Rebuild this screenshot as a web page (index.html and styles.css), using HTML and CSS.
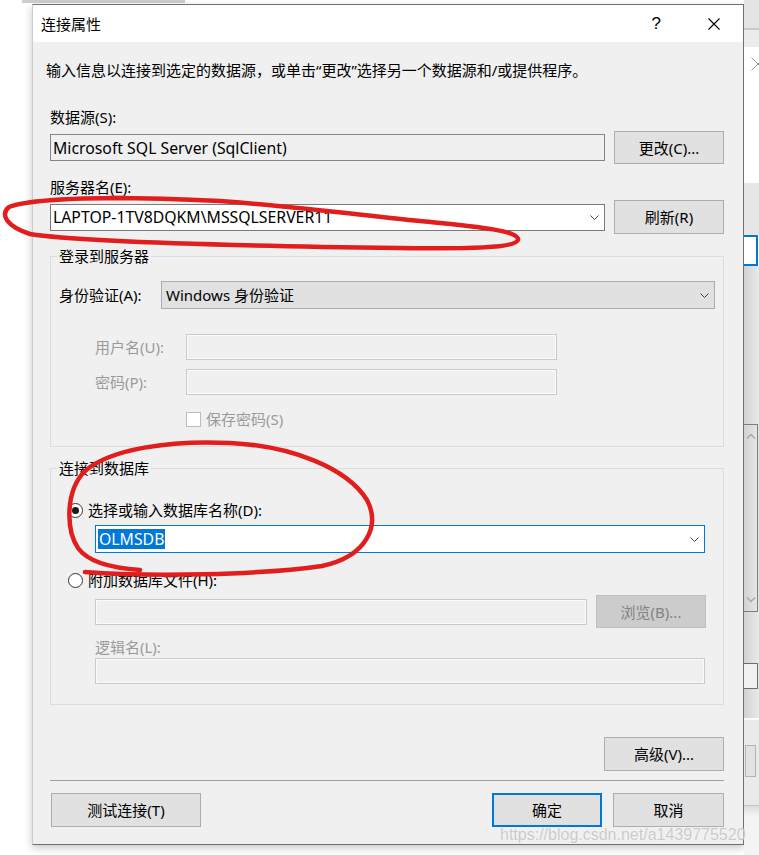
FILE: index.html
```html
<!DOCTYPE html>
<html lang="zh-CN">
<head>
<meta charset="utf-8">
<title>连接属性</title>
<link rel="stylesheet" href="styles.css">
</head>
<body>
<div class="screen">
  <div class="main-col">
    <div class="top-strip"><div class="top-bar"></div></div>
    <div class="dialog">
      <div class="titlebar">
        <span class="title">连接属性</span>
        <span class="help">?</span>
        <svg class="close" viewBox="0 0 12 12" width="12" height="12"><path d="M0.5 0.5 L11.5 11.5 M11.5 0.5 L0.5 11.5" stroke="#000" stroke-width="1.1" fill="none"/></svg>
      </div>
      <div class="body">
        <p class="intro">输入信息以连接到选定的数据源，或单击“更改”选择另一个数据源和/或提供程序。</p>
        <div class="label lbl-src">数据源(S):</div>
        <div class="row row-src">
          <div class="field field-ro"><span class="lat">Microsoft SQL Server (SqlClient)</span></div>
          <button class="btn btn-side">更改(C)...</button>
        </div>
        <div class="label lbl-srv">服务器名(E):</div>
        <div class="row row-srv">
          <div class="field combo">
            <span class="lat">LAPTOP-1TV8DQKM\MSSQLSERVER11</span>
            <svg class="chev" viewBox="0 0 9 5" width="9" height="5"><polyline points="0.5,0.5 4.5,4.5 8.5,0.5" fill="none" stroke="#404040" stroke-width="1"/></svg>
          </div>
          <button class="btn btn-side">刷新(R)</button>
        </div>

        <fieldset class="group group-login">
          <legend>登录到服务器</legend>
          <div class="row row-auth">
            <span class="auth-label">身份验证(A):</span>
            <div class="dropdown">
              <span>Windows 身份验证</span>
              <svg class="chev" viewBox="0 0 9 5" width="9" height="5"><polyline points="0.5,0.5 4.5,4.5 8.5,0.5" fill="none" stroke="#404040" stroke-width="1"/></svg>
            </div>
          </div>
          <div class="row row-user">
            <span class="cred-label disabled">用户名(U):</span>
            <div class="field-dis cred-box"></div>
          </div>
          <div class="row row-pwd">
            <span class="cred-label disabled">密码(P):</span>
            <div class="field-dis cred-box"></div>
          </div>
          <div class="row row-save">
            <span class="checkbox"></span>
            <span class="disabled save-label">保存密码(S)</span>
          </div>
        </fieldset>

        <fieldset class="group group-db">
          <legend>连接到数据库</legend>
          <div class="row radio-row radio-first">
            <span class="radio checked"></span>
            <span>选择或输入数据库名称(D):</span>
          </div>
          <div class="field combo combo-db">
            <span class="selected lat">OLMSDB</span>
            <svg class="chev" viewBox="0 0 9 5" width="9" height="5"><polyline points="0.5,0.5 4.5,4.5 8.5,0.5" fill="none" stroke="#404040" stroke-width="1"/></svg>
          </div>
          <div class="row radio-row radio-second">
            <span class="radio"></span>
            <span>附加数据库文件(H):</span>
          </div>
          <div class="row row-file">
            <div class="field-dis file-box"></div>
            <button class="btn btn-dis">浏览(B)...</button>
          </div>
          <div class="label disabled lbl-logic">逻辑名(L):</div>
          <div class="field-dis logic-box"></div>
        </fieldset>

        <div class="row row-adv">
          <button class="btn btn-adv">高级(V)...</button>
        </div>
        <div class="separator"></div>
        <div class="row row-bottom">
          <button class="btn btn-test">测试连接(T)</button>
          <span class="spacer"></span>
          <button class="btn btn-ok">确定</button>
          <button class="btn btn-cancel">取消</button>
        </div>
      </div>
    </div>
  </div>

  <div class="bg-strip">
    <div class="bg-tab"></div>
    <div class="bg-tabline"></div>
    <div class="bg-head"></div>
    <div class="bg-pane">
      <svg class="bg-x" viewBox="0 0 14 14" width="14" height="14"><path d="M0.5 0.5 L13.5 13.5 M13.5 0.5 L0.5 13.5" stroke="#9a9a9a" stroke-width="1" fill="none"/></svg>
    </div>
    <div class="bg-gray"></div>
    <div class="bg-focus"></div>
    <div class="bg-scroll">
      <div class="bg-scroll-box">
        <svg class="bg-arrow" viewBox="0 0 10 6" width="10" height="6"><polyline points="1,5.5 5,1.5 9,5.5" fill="none" stroke="#a9a9a9" stroke-width="1.5"/></svg>
        <svg class="bg-arrow" viewBox="0 0 10 6" width="10" height="6"><polyline points="1,0.5 5,4.5 9,0.5" fill="none" stroke="#a9a9a9" stroke-width="1.5"/></svg>
      </div>
      <div class="bg-small-box"></div>
    </div>
    <div class="bg-lower">
      <div class="bg-btn"></div>
    </div>
    <div class="bg-foot"></div>
  </div>

  <svg class="marks" viewBox="0 0 759 855" width="759" height="855">
    <path d="M125 198 C80 198, 30 199, 9 207 C-1 215, 8 227, 30 234 C80 242, 250 246, 400 248 C470 249, 515 248, 518 240 C520 230, 470 226, 420 221 C360 215, 300 207, 220 201 C180 199, 140 198, 110 198" fill="none" stroke="#e21d1d" stroke-width="4.5" stroke-linecap="round" stroke-linejoin="round"/>
    <path d="M85 572 C150 577, 260 575, 322 566 C368 556, 380 525, 367 500 C347 468, 292 446, 230 443 C170 440, 110 449, 85 471 C65 491, 66 530, 78 548 C88 562, 110 568, 140 570" fill="none" stroke="#e21d1d" stroke-width="4.5" stroke-linecap="round" stroke-linejoin="round"/>
  </svg>
  <div class="watermark">https://blog.csdn.net/a1439775520</div>
</div>
</body>
</html>
```

FILE: styles.css
```css
* { box-sizing: border-box; }
html, body { margin: 0; padding: 0; }
body {
  background: #fff;
  font-family: "Noto Sans", "Noto Sans CJK SC", sans-serif;
  font-size: 15px;
  color: #000;
}
button { font: inherit; color: inherit; margin: 0; padding: 0; }

.screen {
  position: relative;
  width: 759px;
  height: 855px;
  display: flex;
  overflow: hidden;
  background: #fff;
}
.main-col { width: 744px; flex: none; }
.top-strip { height: 4px; }
.top-bar { margin-left: 22px; width: 163px; height: 3px; background: #cdcdcd; }

.dialog {
  margin-left: 32px;
  width: 712px;
  height: 841px;
  border: 1px solid #707070;
  border-left-color: #cccccc;
  background: #f0f0f0;
  box-shadow: 0 3px 8px rgba(0, 0, 0, 0.22);
  display: flex;
  flex-direction: column;
}
.titlebar {
  flex: none;
  height: 37px;
  background: #fff;
  display: flex;
  align-items: center;
  padding-left: 8px;
}
.title { flex: 1; line-height: 20px; }
.help {
  font-family: "Liberation Sans", sans-serif;
  font-size: 17px;
  line-height: 20px;
  margin-right: 47px;
}
.close { display: block; margin-right: 23px; }

.body { flex: 1; padding: 0 19px 0 17px; }
.intro { margin: 18px 0 0 -4px; line-height: 20px; white-space: nowrap; }
.label { height: 20px; line-height: 20px; white-space: nowrap; }
.lbl-src { margin-top: 27px; }
.lbl-srv { margin-top: 13px; }
.row { display: flex; align-items: center; }
.row-src { margin-top: 4px; height: 33px; }
.row-srv { margin-top: 3px; height: 34px; }

.lat { font-size: 15.8px; }

.field {
  height: 27px;
  border: 1px solid #868686;
  padding-left: 2px;
  display: flex;
  align-items: center;
  line-height: 20px;
  white-space: nowrap;
  overflow: hidden;
}
.field-ro { width: 555px; background: #f0f0f0; }
.combo {
  background: #fff;
  border-color: #7a7a7a;
  justify-content: space-between;
  padding-right: 5px;
}
.row-srv .combo { width: 555px; }
.chev { display: block; flex: none; }

.btn {
  background: #e1e1e1;
  border: 1px solid #adadad;
  height: 34px;
  line-height: 20px;
  text-align: center;
  white-space: nowrap;
}
.btn-side { width: 110px; margin-left: 9px; }
.row-src .btn-side { height: 33px; }

.group {
  margin: 0;
  padding: 0 8px 19px 8px;
  border: 1px solid #dcdcdc;
  min-inline-size: 0;
}
.group legend {
  padding: 0 2px;
  margin-left: -2px;
  line-height: 20px;
  height: 20px;
}
.group-login { margin-top: 12px; }
.group-db { margin-top: 11px; padding-bottom: 20px; }

.row-auth { margin-top: 15px; height: 28px; }
.auth-label { width: 102px; line-height: 20px; white-space: nowrap; }
.dropdown {
  flex: 1;
  height: 28px;
  background: #e1e1e1;
  border: 1px solid #adadad;
  display: flex;
  align-items: center;
  justify-content: space-between;
  padding: 0 5px 0 4px;
  line-height: 20px;
}

.disabled { color: #9a9a9a; }
.field-dis {
  height: 26px;
  border: 1px solid #cacaca;
  box-shadow: inset 0 0 0 1px #fbfbfb;
  background: #f0f0f0;
}
.row-user { margin-top: 25px; height: 26px; padding-left: 36px; }
.row-pwd { margin-top: 9px; height: 26px; padding-left: 36px; }
.cred-label { width: 91px; line-height: 20px; white-space: nowrap; }
.cred-box { width: 371px; }
.row-save { margin-top: 16px; height: 16px; padding-left: 127px; }
.checkbox {
  width: 15px;
  height: 15px;
  border: 1px solid #bcbcbc;
  background: #fff;
  margin-right: 5px;
}
.save-label { line-height: 20px; }

.radio-row { height: 20px; padding-left: 9px; line-height: 20px; }
.radio-first { margin-top: 22px; }
.radio-second { margin-top: 17px; }
.radio {
  width: 15px;
  height: 15px;
  border: 1px solid #333;
  border-radius: 50%;
  background: #fff;
  margin-right: 5px;
  display: flex;
  align-items: center;
  justify-content: center;
}
.radio.checked::after {
  content: "";
  width: 7px;
  height: 7px;
  border-radius: 50%;
  background: #1a1a1a;
}
.combo-db {
  margin: 5px 10px 0 36px;
  height: 28px;
  border-color: #0078d7;
  padding-left: 2px;
}
.selected {
  background: #0078d7;
  color: #fff;
  padding: 0 1px;
  line-height: 20px;
}
.row-file { margin-top: 5px; height: 33px; padding-left: 36px; }
.file-box { width: 492px; }
.btn-dis {
  width: 110px;
  height: 33px;
  margin-left: 9px;
  background: #cccccc;
  border-color: #bfbfbf;
  color: #838383;
}
.lbl-logic { margin: 9px 0 0 36px; }
.logic-box { margin: 1px 10px 0 36px; }

.row-adv { margin-top: 32px; justify-content: flex-end; }
.btn-adv { width: 120px; }
.separator { margin-top: 9px; height: 1px; background: #a0a0a0; }
.row-bottom { margin-top: 12px; }
.btn-test { width: 150px; margin-left: 1px; }
.spacer { flex: 1; }
.btn-ok { width: 110px; border: 2px solid #0078d7; margin-right: 11px; }
.btn-cancel { width: 111px; }

/* background window at the right */
.bg-strip { flex: none; width: 15px; display: flex; flex-direction: column; height: 855px; }
.bg-tab { height: 28px; background: #e4e4e4; }
.bg-tabline { height: 2px; background: #c6cad3; }
.bg-head { height: 17px; background: #ececec; }
.bg-pane { height: 136px; background: #fff; padding: 10px 0 0 7px; overflow: hidden; }
.bg-x { display: block; }
.bg-gray { height: 52px; background: #e6e6e6; }
.bg-focus {
  height: 31px;
  width: 14px;
  background: #fff;
  border: 2px solid #0078d7;
  border-left: 0;
}
.bg-scroll {
  height: 452px;
  background: linear-gradient(to right, #d2d2d2, #e9e9e9);
  padding-top: 158px;
}
.bg-scroll-box {
  height: 188px;
  width: 14px;
  border: 1px solid #7c7c7c;
  border-left: 0;
  display: flex;
  flex-direction: column;
  justify-content: space-between;
  padding: 8px 0 8px 2px;
}
.bg-arrow { display: block; }
.bg-small-box {
  margin-top: 51px;
  height: 26px;
  width: 14px;
  border: 1px solid #6d6d6d;
  border-left: 0;
  background: #f1f1f1;
}
.bg-lower {
  height: 87px;
  background: #eaeaea;
  border-top: 2px solid #fafafa;
  padding-top: 25px;
}
.bg-btn {
  width: 11px;
  margin-left: 1px;
  height: 32px;
  border: 1px solid #b4b4b4;
  background: #e2e2e2;
}
.bg-foot {
  flex: 1;
  border-top: 1px solid #c4c4c4;
  background: linear-gradient(to bottom, #dcdcdc, #f3f3f3 20%, #f3f3f3);
}

.marks {
  position: absolute;
  left: 0;
  top: 0;
  pointer-events: none;
}
.watermark {
  position: absolute;
  left: 500px;
  top: 825px;
  font-family: "Liberation Sans", sans-serif;
  font-size: 16px;
  line-height: 20px;
  color: rgba(185, 185, 185, 0.75);
  text-shadow: 0 0 1px rgba(255, 255, 255, 0.9);
  white-space: nowrap;
}
```
